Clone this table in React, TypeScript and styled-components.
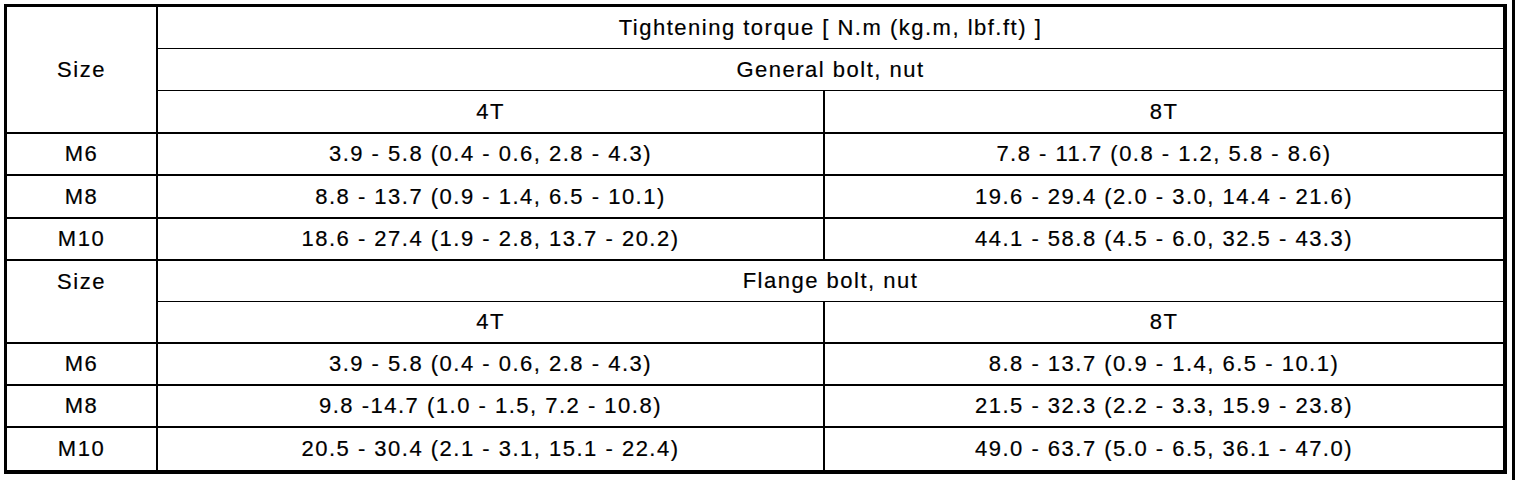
import React from "react";
import styled, { createGlobalStyle } from "styled-components";

type Row = {
  size: string;
  t4: string;
  t8: string;
  height: number;
};

type Group = {
  title: string;
  headerHeights: number[];
  rows: Row[];
};

const GlobalStyle = createGlobalStyle`
  html, body {
    margin: 0;
    padding: 0;
    background: #ffffff;
  }
  body {
    font-family: "Liberation Sans", Arial, sans-serif;
    color: #000000;
  }
`;

const Page = styled.div`
  display: flex;
  align-items: flex-start;
  gap: 5px;
  height: 480px;
  width: 1520px;
  overflow: hidden;
`;

const TableWrap = styled.div`
  padding: 4px 0 0 4px;
`;

const EdgeRule = styled.div`
  align-self: stretch;
  width: 3px;
  background: #000000;
`;

const TorqueTable = styled.table`
  border-collapse: separate;
  border-spacing: 0;
  border-style: solid;
  border-color: #000000;
  border-width: 3px 4px 4px 3px;
  table-layout: fixed;
`;

const Cell = styled.td<{ $line: number; $right?: boolean; $h?: number; $top?: boolean }>`
  padding: 0;
  height: ${(p) => (p.$h ? `${p.$h}px` : "auto")};
  text-align: center;
  vertical-align: ${(p) => (p.$top ? "top" : "middle")};
  font-size: 22px;
  letter-spacing: 1.5px;
  line-height: ${(p) => (p.$top ? "42px" : "22px")};
  white-space: nowrap;
  -webkit-text-stroke: 0.2px #000000;
  border-bottom: ${(p) => p.$line}px solid #000000;
  border-right: ${(p) => (p.$right ? "2px solid #000000" : "none")};
`;

const groups: Group[] = [
  {
    title: "General bolt, nut",
    headerHeights: [41, 41, 41],
    rows: [
      { size: "M6", t4: "3.9 - 5.8 (0.4 - 0.6, 2.8 - 4.3)", t8: "7.8 - 11.7 (0.8 - 1.2, 5.8 - 8.6)", height: 40 },
      { size: "M8", t4: "8.8 - 13.7 (0.9 - 1.4, 6.5 - 10.1)", t8: "19.6 - 29.4 (2.0 - 3.0, 14.4 - 21.6)", height: 41 },
      { size: "M10", t4: "18.6 - 27.4 (1.9 - 2.8, 13.7 - 20.2)", t8: "44.1 - 58.8 (4.5 - 6.0, 32.5 - 43.3)", height: 40 },
    ],
  },
  {
    title: "Flange bolt, nut",
    headerHeights: [40, 40],
    rows: [
      { size: "M6", t4: "3.9 - 5.8 (0.4 - 0.6, 2.8 - 4.3)", t8: "8.8 - 13.7 (0.9 - 1.4, 6.5 - 10.1)", height: 40 },
      { size: "M8", t4: "9.8 -14.7 (1.0 - 1.5, 7.2 - 10.8)", t8: "21.5 - 32.3 (2.2 - 3.3, 15.9 - 23.8)", height: 40 },
      { size: "M10", t4: "20.5 - 30.4 (2.1 - 3.1, 15.1 - 22.4)", t8: "49.0 - 63.7 (5.0 - 6.5, 36.1 - 47.0)", height: 42 },
    ],
  },
];

const GroupRows: React.FC<{ group: Group; first: boolean; last: boolean }> = ({
  group,
  first,
  last,
}) => {
  const h = group.headerHeights;
  return (
    <>
      {first ? (
        <>
          <tr>
            <Cell rowSpan={3} $line={2} $right>
              Size
            </Cell>
            <Cell colSpan={2} $line={1} $h={h[0]}>
              Tightening torque [ N.m (kg.m, lbf.ft) ]
            </Cell>
          </tr>
          <tr>
            <Cell colSpan={2} $line={1} $h={h[1]}>
              {group.title}
            </Cell>
          </tr>
        </>
      ) : (
        <tr>
          <Cell rowSpan={2} $line={2} $right $top>
            Size
          </Cell>
          <Cell colSpan={2} $line={1} $h={h[0]}>
            {group.title}
          </Cell>
        </tr>
      )}
      <tr>
        <Cell $line={2} $right $h={h[h.length - 1]}>
          4T
        </Cell>
        <Cell $line={2}>8T</Cell>
      </tr>
      {group.rows.map((r, i) => {
        const line = last && i === group.rows.length - 1 ? 0 : 2;
        return (
          <tr key={r.size}>
            <Cell $line={line} $right $h={r.height}>
              {r.size}
            </Cell>
            <Cell $line={line} $right>
              {r.t4}
            </Cell>
            <Cell $line={line}>{r.t8}</Cell>
          </tr>
        );
      })}
    </>
  );
};

const App: React.FC = () => {
  return (
    <Page>
      <GlobalStyle />
      <TableWrap>
        <TorqueTable>
          <colgroup>
            <col style={{ width: 151 }} />
            <col style={{ width: 667 }} />
            <col style={{ width: 678 }} />
          </colgroup>
          <tbody>
            {groups.map((g, i) => (
              <GroupRows
                key={g.title}
                group={g}
                first={i === 0}
                last={i === groups.length - 1}
              />
            ))}
          </tbody>
        </TorqueTable>
      </TableWrap>
      <EdgeRule />
    </Page>
  );
};

export default App;
